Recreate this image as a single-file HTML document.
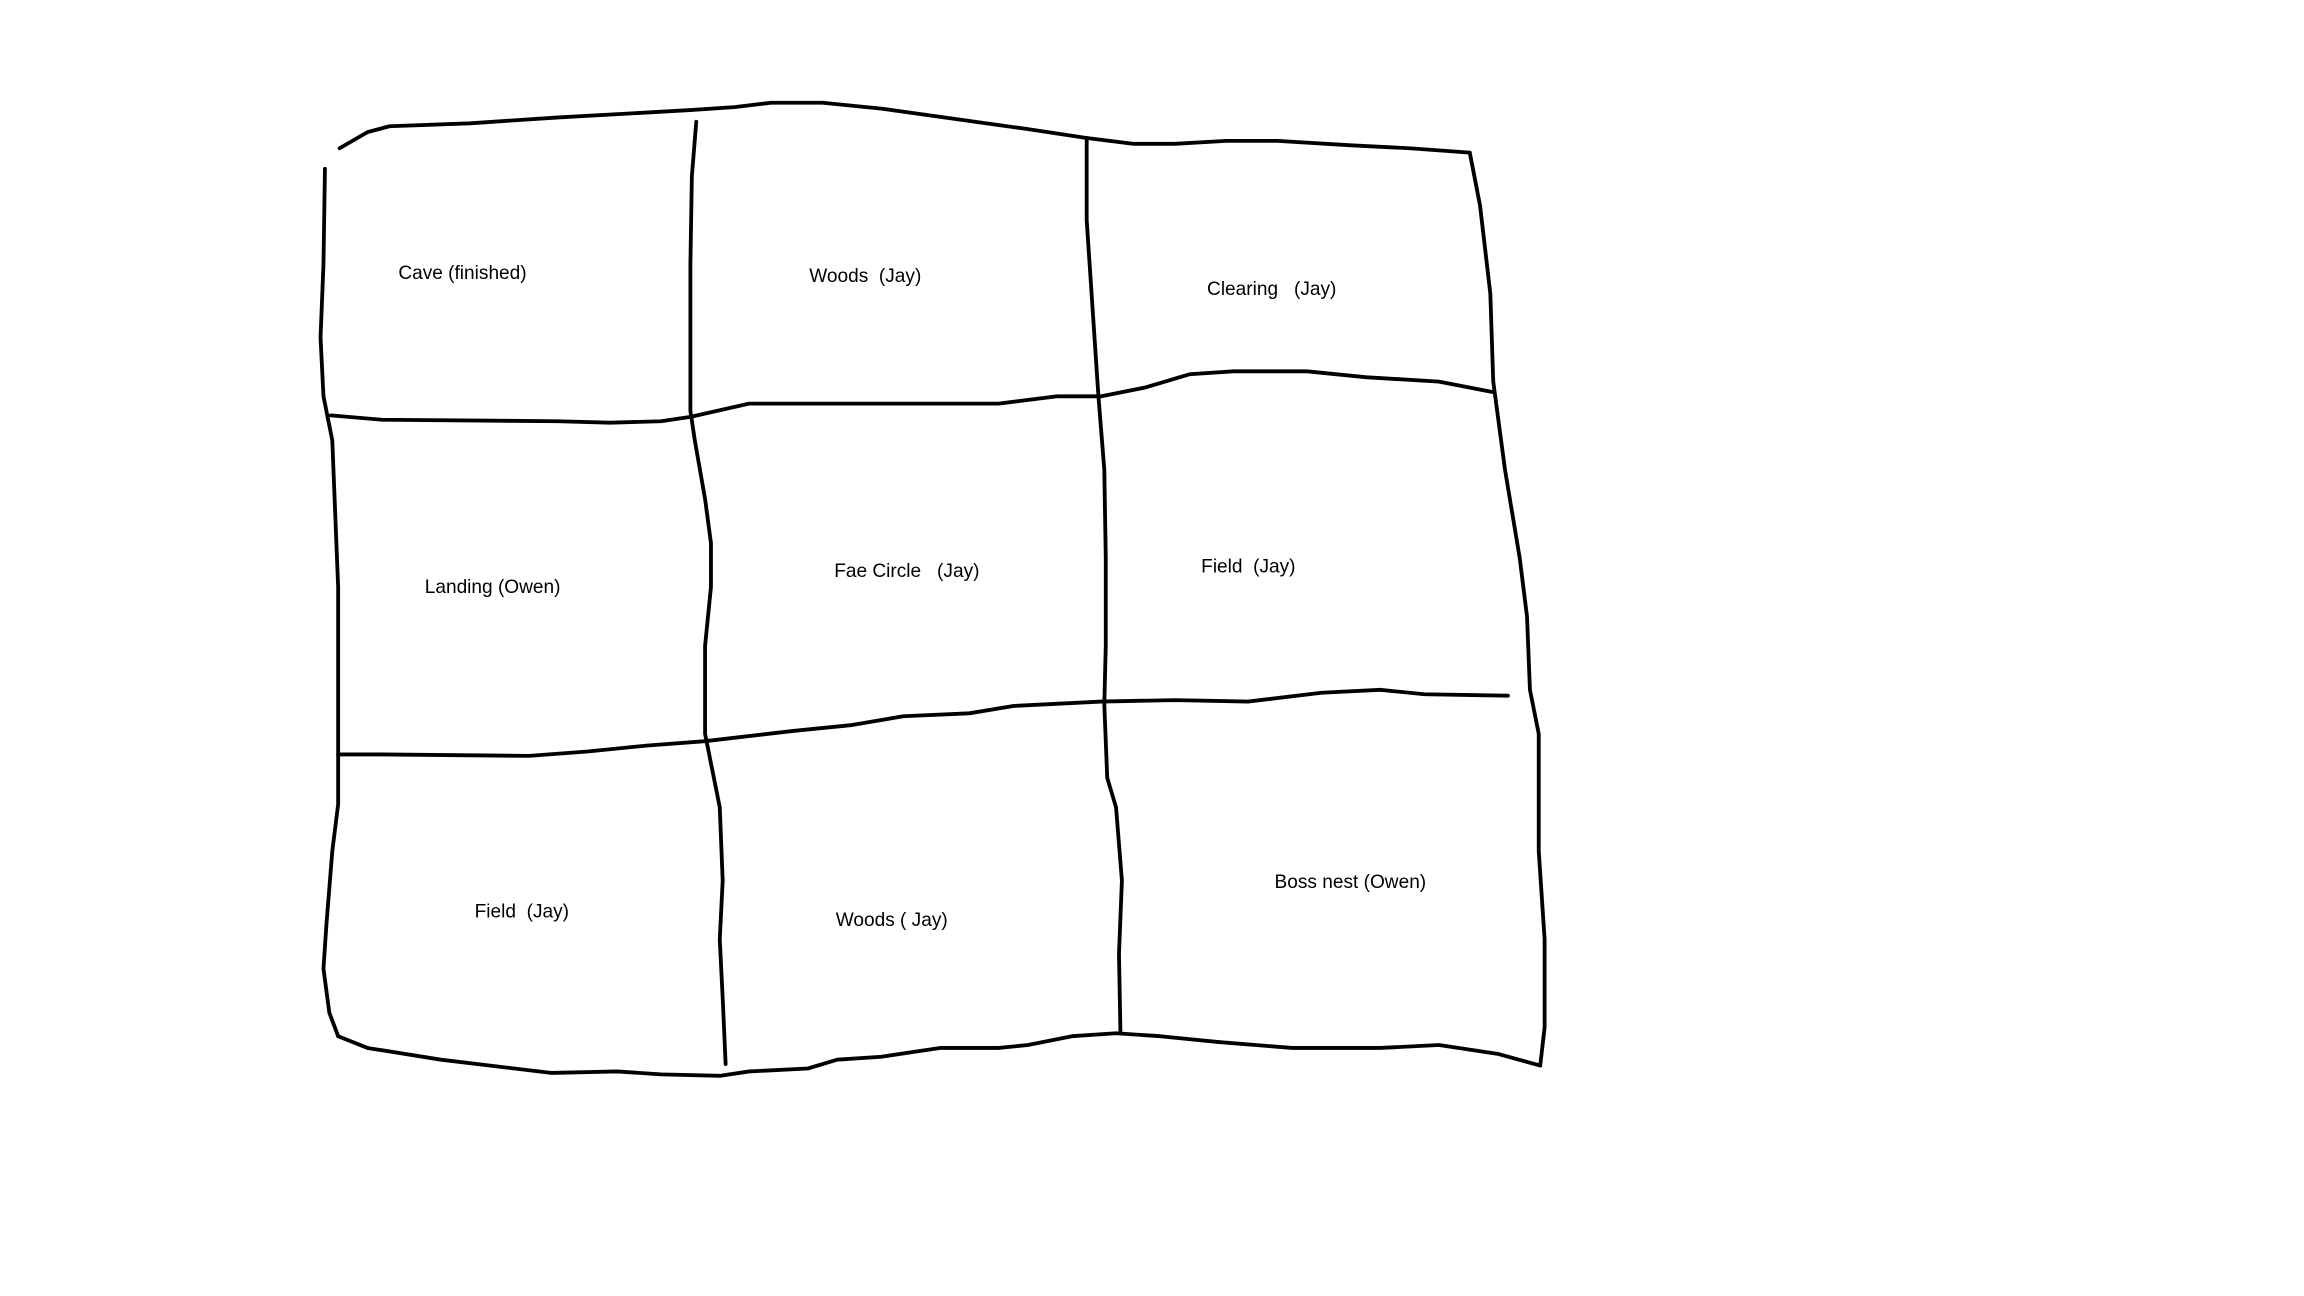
<!DOCTYPE html>
<html><head><meta charset="utf-8"><style>html,body{margin:0;padding:0;background:#fff;overflow:hidden}svg{display:block}</style></head>
<body>
<svg width="2304" height="1296" viewBox="0 0 1569 883" xmlns="http://www.w3.org/2000/svg">
<rect width="1569" height="883" fill="#fff"/>
<g fill="none" stroke="#000" stroke-width="2.6" stroke-linejoin="round" stroke-linecap="round">
<polyline points="231,101 250,90 265,86 320,84 380,80 470,75 500,73 525,70 560,70 600,74 650,81 700,88 740,94 772,98 800,98 835,96 870,96 920,99 960,101 1001,104"/>
<polyline points="1001,104 1008,140 1015,200 1017,260 1025,320 1035,380 1040,420 1042,470 1048,500 1048,580 1052,640 1052,700 1049,726"/>
<polyline points="1049,726 1020,718 980,712 940,714 880,714 830,710 790,706 760,704 730,706 700,712 680,714 640,714 600,720 570,722 550,728 510,730 490,733 450,732 420,730 375,731 300,722 250,714 230,706"/>
<polyline points="221,115 220,180 218,230 220,270 226,300 228,350 230,400 230,470 230,548 226,580 222,630 220,660 224,690 230,706"/>
<polyline points="225,283 260,286 380,287 415,288 450,287 470,284 510,275 560,275 680,275 720,270 750,270 780,264 810,255 840,253 890,253 930,257 980,260 1016,267"/>
<polyline points="230,514 260,514 360,515 400,512 440,508 480,505 540,498 580,494 615,488 660,486 690,481 750,478 800,477 850,478 900,472 940,470 970,473 1027,474"/>
<polyline points="474,83 471,120 470,180 470,280 473,300 480,340 484,370 484,400 480,440 480,500 484,520 490,550 492,600 490,640 492,680 494,725"/>
<polyline points="740,94 740,150 744,210 748,270 752,320 753,380 753,440 752,480 754,530 760,550 764,600 762,650 763,704"/>
</g>
<g font-family="Liberation Sans, sans-serif" font-size="13" fill="#000">
<text x="271" y="190">Cave (finished)</text>
<text x="551" y="192">Woods&#160;&#160;(Jay)</text>
<text x="822" y="201">Clearing&#160;&#160;&#160;(Jay)</text>
<text x="289" y="404">Landing (Owen)</text>
<text x="568" y="393">Fae Circle&#160;&#160;&#160;(Jay)</text>
<text x="818" y="390">Field&#160;&#160;(Jay)</text>
<text x="323" y="625">Field&#160;&#160;(Jay)</text>
<text x="569" y="631">Woods ( Jay)</text>
<text x="868" y="605">Boss nest (Owen)</text>
</g>
</svg>
</body></html>
